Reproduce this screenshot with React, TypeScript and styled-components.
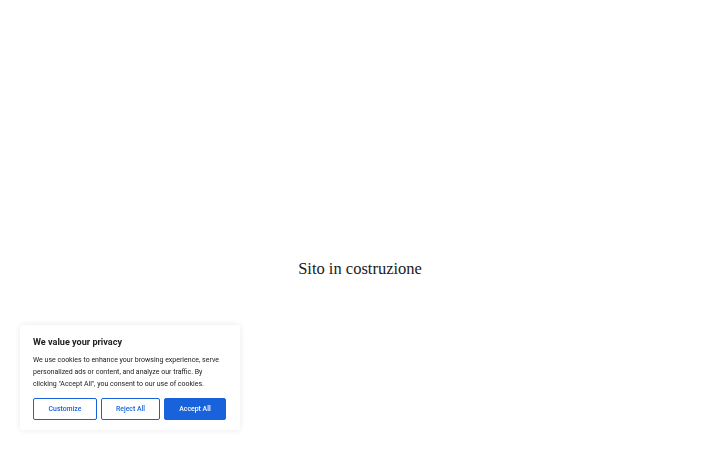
import React from "react";
import styled, { createGlobalStyle } from "styled-components";

const GlobalStyle = createGlobalStyle`
	html, body {
		margin: 0;
		padding: 0;
		background: #ffffff;
	}
	* {
		box-sizing: border-box;
	}
`;

const Page = styled.main`
	width: 100vw;
	height: 100vh;
	display: flex;
	justify-content: center;
	padding-top: 256px;
`;

const Title = styled.h1`
	margin: 0;
	font-family: "Liberation Serif", serif;
	font-weight: 400;
	font-size: 16.5px;
	line-height: 26px;
	color: #1a1a1a;
`;

const Banner = styled.div`
	position: fixed;
	left: 20px;
	bottom: 20px;
	width: 220px;
	padding: 11px 13px 10px;
	background: #ffffff;
	border-radius: 3px;
	box-shadow: 0 0 6px rgba(0, 0, 0, 0.09);
	font-family: Roboto, "Liberation Sans", sans-serif;
`;

const BannerTitle = styled.p`
	margin: 0 0 6px;
	font-size: 9.1px;
	font-weight: 700;
	line-height: 12px;
	color: #212121;
`;

const BannerText = styled.p`
	margin: 0 0 8px;
	font-size: 7px;
	line-height: 12px;
	color: #212121;
`;

const Buttons = styled.div`
	display: flex;
	gap: 4px;
`;

const Button = styled.button<{ $primary?: boolean; $w: number }>`
	width: ${(p) => p.$w}px;
	height: 22px;
	padding: 0;
	border: 1.5px solid #1863dc;
	border-radius: 2px;
	background: ${(p) => (p.$primary ? "#1863dc" : "#ffffff")};
	color: ${(p) => (p.$primary ? "#ffffff" : "#1863dc")};
	font-family: Roboto, "Liberation Sans", sans-serif;
	font-size: 6.9px;
	font-weight: 500;
	cursor: pointer;
`;

export default function App() {
	return (
		<>
			<GlobalStyle />
			<Page>
				<Title>Sito in costruzione</Title>
			</Page>
			<Banner>
				<BannerTitle>We value your privacy</BannerTitle>
				<BannerText>
					We use cookies to enhance your browsing experience, serve
					personalized ads or content, and analyze our traffic. By
					clicking "Accept All", you consent to our use of cookies.
				</BannerText>
				<Buttons>
					<Button $w={64}>Customize</Button>
					<Button $w={59}>Reject All</Button>
					<Button $w={62} $primary>
						Accept All
					</Button>
				</Buttons>
			</Banner>
		</>
	);
}
